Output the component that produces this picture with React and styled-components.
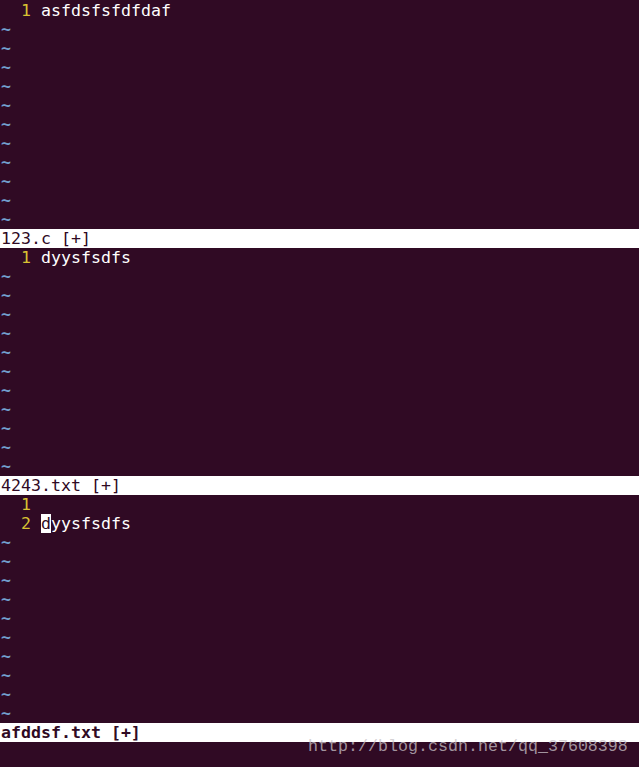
import React from "react";
import styled, { createGlobalStyle } from "styled-components";

const Global = createGlobalStyle`
  html, body { margin: 0; padding: 0; background: #300a24; }
  body { width: 639px; height: 767px; overflow: hidden; }
`;

const Terminal = styled.div`
  position: relative;
  width: 639px;
  height: 767px;
  background: #300a24;
  padding-top: 1px;
  box-sizing: border-box;
  font-family: "DejaVu Sans Mono", monospace;
  font-size: 16.6px;
  line-height: 19px;
  color: #ffffff;
  display: flex;
  flex-direction: column;
`;

const Pane = styled.div`
  display: flex;
  flex-direction: column;
`;

const Row = styled.div`
  height: 19px;
  white-space: pre;
  display: flex;
  padding-left: 1px;
`;

const LineNr = styled.span`
  color: #d8c232;
  width: 40px;
  flex: none;
  white-space: pre;
`;

const Text = styled.span`
  color: #ffffff;
  white-space: pre;
`;

const Cursor = styled.span`
  background: #ffffff;
  color: #300a24;
`;

const Tilde = styled.div`
  height: 19px;
  color: #729fcf;
  font-weight: bold;
  padding-left: 1px;
`;

const StatusLine = styled.div`
  height: 19px;
  background: #ffffff;
  color: #300a24;
  font-weight: ${(p) => (p.$current ? "bold" : "normal")};
  white-space: pre;
  padding-left: 1px;
`;

const CmdLine = styled.div`
  height: 19px;
`;

const Watermark = styled.div`
  position: absolute;
  left: 308px;
  top: 737px;
  font-family: "Liberation Mono", "DejaVu Sans Mono", monospace;
  font-size: 16.67px;
  line-height: 20px;
  color: rgba(200, 195, 200, 0.75);
  white-space: pre;
`;

function Window({ lines, tildes, name, current }) {
  return (
    <Pane>
      {lines.map((l, i) => (
        <Row key={i}>
          <LineNr>{String(i + 1).padStart(3, " ") + " "}</LineNr>
          <Text>
            {l.cursor ? (
              <>
                <Cursor>{l.text[0]}</Cursor>
                {l.text.slice(1)}
              </>
            ) : (
              l.text
            )}
          </Text>
        </Row>
      ))}
      {Array.from({ length: tildes }).map((_, i) => (
        <Tilde key={i}>~</Tilde>
      ))}
      <StatusLine $current={current}>{name}</StatusLine>
    </Pane>
  );
}

export default function App() {
  return (
    <>
      <Global />
      <Terminal>
        <Window lines={[{ text: "asfdsfsfdfdaf" }]} tildes={11} name="123.c [+]" />
        <Window lines={[{ text: "dyysfsdfs" }]} tildes={11} name="4243.txt [+]" />
        <Window
          lines={[{ text: "" }, { text: "dyysfsdfs", cursor: true }]}
          tildes={10}
          name="afddsf.txt [+]"
          current
        />
        <CmdLine />
        <Watermark>http://blog.csdn.net/qq_37608398</Watermark>
      </Terminal>
    </>
  );
}
